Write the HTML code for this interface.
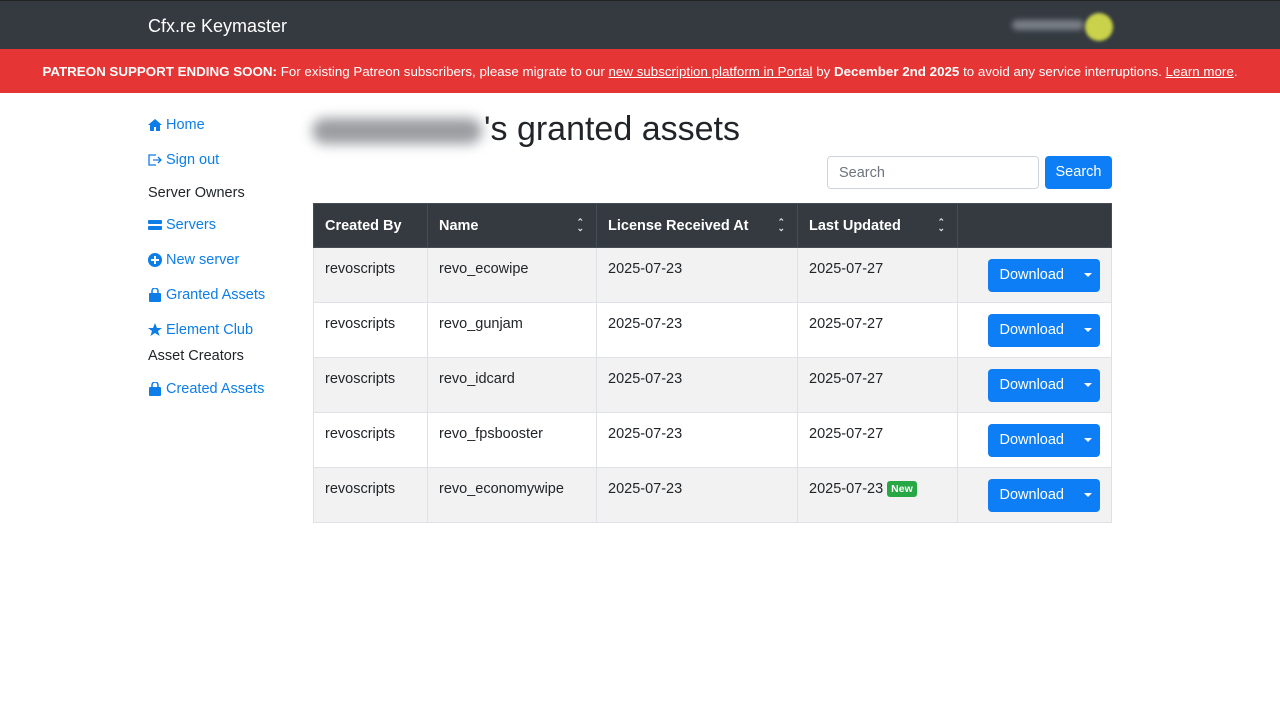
<!DOCTYPE html>
<html><head><style>
*{box-sizing:border-box;margin:0;padding:0}
body{width:1280px;height:720px;background:#fff;font-family:"Liberation Sans",sans-serif;color:#212529;position:relative;overflow:hidden}
.nav{position:absolute;left:0;top:0;width:1280px;height:49px;background:#343a40;border-top:1px solid #222}
.brand{position:absolute;left:148px;top:15px;color:#fff;font-size:18px}
.user{position:absolute;left:1012px;top:19px;width:72px;height:10px;background:#7a7f86;border-radius:5px;filter:blur(3px)}
.av{position:absolute;left:1085px;top:12px;width:28px;height:28px;border-radius:50%;background:#c9d24a;filter:blur(1.5px)}
.ban{position:absolute;left:0;top:49px;width:1280px;height:44px;background:#e53535;color:#fff;font-size:13.35px;text-align:center;line-height:45px;white-space:nowrap}
.ban u{text-decoration:underline}
.side a,.side div{position:absolute;left:148px;font-size:14.5px}
.side a{color:#0d7ee8;text-decoration:none;display:flex;align-items:center;gap:4px}
.side div{color:#212529}
svg{display:inline-block}
h1{position:absolute;left:312px;top:110px;font-size:34px;font-weight:500;color:#212529}
.blur{display:inline-block;width:170px;height:26px;background:#9a9da1;border-radius:13px;filter:blur(6px);vertical-align:middle;margin-right:2px}
.search{position:absolute;left:827px;top:156px;width:212px;height:33px;border:1px solid #ced4da;border-radius:4px;font-size:14.5px;color:#6c757d;padding:8px 11px}
.sbtn{position:absolute;left:1045px;top:156px;width:67px;height:33px;background:#0d7ef6;border-radius:4px;color:#fff;font-size:14.5px;text-align:center;line-height:33px}
table{position:absolute;left:313px;top:203px;border-collapse:collapse;width:799px;font-size:14.5px}
th{background:#343a40;color:#fff;text-align:left;height:44px;padding:0 11px;font-weight:bold;border:1px solid #454d55;position:relative}
td{height:55px;padding:0 11px;vertical-align:top;padding-top:13px;border:1px solid #dee2e6}
tr:nth-child(even) td{background:#f2f2f2}
.sort{position:absolute;right:12px;top:15px;font-size:9px;line-height:6px;color:#ddd}
.dl{display:flex;float:right;margin-top:-2px;height:33px;background:#0d7ef6;border-radius:4px;color:#fff;font-size:14.5px}
.dl span{padding:0 12px;line-height:33px}
.dl i{width:24px;position:relative}
.dl i:after{content:"";position:absolute;left:8px;top:14px;border:4px solid transparent;border-top:4px solid #fff}
.new{background:#28a745;color:#fff;font-size:10.5px;font-weight:bold;padding:2px 4px;border-radius:3px;margin-left:4px;vertical-align:1px}
</style></head><body>
<div class="nav"><div class="brand">Cfx.re Keymaster</div><div class="user"></div><div class="av"></div></div>
<div class="ban"><b>PATREON SUPPORT ENDING SOON:</b> For existing Patreon subscribers, please migrate to our <u>new subscription platform in Portal</u> by <b>December 2nd 2025</b> to avoid any service interruptions. <u>Learn more</u>.</div>
<div class="side">
<a style="top:117px"><svg width="14" height="12" viewBox="0 0 14 12"><path d="M7 0L0 6h2v6h4V8h2v4h4V6h2z" fill="#0d7ee8"/></svg>Home</a>
<a style="top:152px"><svg width="14" height="12" viewBox="0 0 14 12"><path d="M8 1H1v10h7M5 6h8M10 3l3 3-3 3" stroke="#0d7ee8" fill="none" stroke-width="1.3"/></svg>Sign out</a>
<div style="top:185px">Server Owners</div>
<a style="top:217px"><svg width="14" height="12" viewBox="0 0 14 12"><rect x="0" y="1" width="14" height="4" rx="1" fill="#0d7ee8"/><rect x="0" y="7" width="14" height="4" rx="1" fill="#0d7ee8"/></svg>Servers</a>
<a style="top:252px"><svg width="14" height="14" viewBox="0 0 14 14"><circle cx="7" cy="7" r="7" fill="#0d7ee8"/><path d="M7 3v8M3 7h8" stroke="#fff" stroke-width="2"/></svg>New server</a>
<a style="top:287px"><svg width="14" height="14" viewBox="0 0 14 14"><path d="M4 5V3a3 3 0 016 0v2" stroke="#0d7ee8" fill="none" stroke-width="1.5"/><rect x="1" y="5" width="12" height="9" rx="1" fill="#0d7ee8"/></svg>Granted Assets</a>
<a style="top:322px"><svg width="14" height="14" viewBox="0 0 14 14"><path d="M7 0l2 5h5l-4 3 1.6 5L7 10l-4.6 3L4 8 0 5h5z" fill="#0d7ee8"/></svg>Element Club</a>
<div style="top:348px">Asset Creators</div>
<a style="top:381px"><svg width="14" height="14" viewBox="0 0 14 14"><path d="M4 5V3a3 3 0 016 0v2" stroke="#0d7ee8" fill="none" stroke-width="1.5"/><rect x="1" y="5" width="12" height="9" rx="1" fill="#0d7ee8"/></svg>Created Assets</a>
</div>
<h1><span class="blur"></span>'s granted assets</h1>
<div class="search">Search</div><div class="sbtn">Search</div>
<table>
<tr><th style="width:114px">Created By</th><th style="width:169px">Name<span class="sort">⌃<br>⌄</span></th><th style="width:201px">License Received At<span class="sort">⌃<br>⌄</span></th><th style="width:160px">Last Updated<span class="sort">⌃<br>⌄</span></th><th></th></tr>
<tr><td>revoscripts</td><td>revo_ecowipe</td><td>2025-07-23</td><td>2025-07-27</td><td><div class="dl"><span>Download</span><i></i></div></td></tr>
<tr><td>revoscripts</td><td>revo_gunjam</td><td>2025-07-23</td><td>2025-07-27</td><td><div class="dl"><span>Download</span><i></i></div></td></tr>
<tr><td>revoscripts</td><td>revo_idcard</td><td>2025-07-23</td><td>2025-07-27</td><td><div class="dl"><span>Download</span><i></i></div></td></tr>
<tr><td>revoscripts</td><td>revo_fpsbooster</td><td>2025-07-23</td><td>2025-07-27</td><td><div class="dl"><span>Download</span><i></i></div></td></tr>
<tr><td>revoscripts</td><td>revo_economywipe</td><td>2025-07-23</td><td>2025-07-23<span class="new">New</span></td><td><div class="dl"><span>Download</span><i></i></div></td></tr>
</table>
</body></html>
